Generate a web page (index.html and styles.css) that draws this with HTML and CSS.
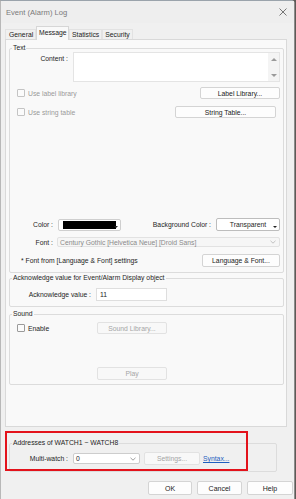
FILE: index.html
```html
<!DOCTYPE html>
<html lang="en">
<head>
    <meta charset="UTF-8">
    <title>Event (Alarm) Log</title>
    <link rel="stylesheet" href="styles.css">
</head>
<body>
    <div class="dialog">
        <!-- Title bar -->
        <div class="titlebar">
            <span class="title">Event (Alarm) Log</span>
            <svg class="close" width="8" height="8" viewBox="0 0 8 8"><path d="M0.5 0.5L7.5 7.5M7.5 0.5L0.5 7.5" stroke="#555" stroke-width="0.8"/></svg>
        </div>

        <!-- Tabs -->
        <div class="tabs">
            <div class="tab tab-general">General</div>
            <div class="tab active">Message</div>
            <div class="tab">Statistics</div>
            <div class="tab">Security</div>
        </div>

        <div class="panel">
            <fieldset class="group text-group">
                <legend>Text</legend>
                <div class="row content-row">
                    <span class="lbl lbl-content">Content :</span>
                    <div class="textarea">
                        <div class="scroll">
                            <span class="arr up"></span>
                            <span class="arr down"></span>
                        </div>
                    </div>
                </div>
                <div class="row check-row first">
                    <span class="check disabled"><i class="box"></i>Use label library</span>
                    <button class="btn btn-label">Label Library...</button>
                </div>
                <div class="row check-row second">
                    <span class="check disabled"><i class="box"></i>Use string table</span>
                    <button class="btn btn-string">String Table...</button>
                </div>
                <div class="row color-row">
                    <span class="lbl lbl-short">Color :</span>
                    <div class="picker"><span class="swatch"></span><span class="drop"></span></div>
                    <span class="lbl lbl-bg">Background Color :</span>
                    <div class="picker picker-bg"><span class="bg-text">Transparent</span><span class="drop"></span></div>
                </div>
                <div class="row font-row">
                    <span class="lbl lbl-short">Font :</span>
                    <div class="select disabled-select">
                        <span>Century Gothic [Helvetica Neue] [Droid Sans]</span>
                        <svg class="chev" width="6" height="4" viewBox="0 0 6 4"><path d="M0.5 0.8L3 3.2L5.5 0.8" fill="none" stroke="#aaa" stroke-width="0.7"/></svg>
                    </div>
                </div>
                <div class="row note-row">
                    <span class="note">* Font from [Language &amp; Font] settings</span>
                    <button class="btn btn-lang">Language &amp; Font...</button>
                </div>
            </fieldset>

            <fieldset class="group ack-group">
                <legend>Acknowledge value for Event/Alarm Display object</legend>
                <div class="row ack-row">
                    <span class="lbl lbl-ack">Acknowledge value :</span>
                    <div class="input">11</div>
                </div>
            </fieldset>

            <fieldset class="group sound-group">
                <legend>Sound</legend>
                <div class="row sound-row">
                    <span class="check enable"><i class="box"></i>Enable</span>
                    <button class="btn btn-sound" disabled>Sound Library...</button>
                </div>
                <div class="row play-row">
                    <button class="btn btn-sound" disabled>Play</button>
                </div>
            </fieldset>
        </div>

        <fieldset class="group watch-group">
            <legend>Addresses of WATCH1 ~ WATCH8</legend>
            <div class="row watch-row">
                <span class="lbl lbl-content">Multi-watch :</span>
                <div class="select combo">
                    <span>0</span>
                    <svg class="chev" width="6" height="4" viewBox="0 0 6 4"><path d="M0.5 0.8L3 3.2L5.5 0.8" fill="none" stroke="#777" stroke-width="0.7"/></svg>
                </div>
                <button class="btn btn-settings" disabled>Settings...</button>
                <a class="link" href="#">Syntax...</a>
            </div>
        </fieldset>

        <!-- red highlight drawn over the screenshot -->
        <div class="highlight"></div>

        <div class="buttons">
            <button class="btn btn-ok">OK</button>
            <button class="btn btn-cancel">Cancel</button>
            <button class="btn btn-help">Help</button>
        </div>
    </div>
</body>
</html>
```

FILE: styles.css
```css
* {
    box-sizing: border-box;
}
body {
    margin: 0;
    background-color: #5e5a56;
    font-family: "Liberation Sans", Arial, sans-serif;
    font-size: 6.8px;
    color: #1e1e1e;
}
.dialog {
    position: relative;
    width: 295px;
    height: 499px;
    background-color: #f0f0f0;
    border-top: 1px solid #9aa3ab;
    border-right: 1px solid #8c8c8c;
    border-left: 1px solid #b8b8b8;
    border-top-right-radius: 4px;
}
.titlebar {
    height: 22px;
    display: flex;
    align-items: center;
    justify-content: space-between;
    padding: 0 6px 0 5px;
    background-color: #eeeeee;
}
.title {
    font-size: 7.6px;
    color: #7a7a7a;
}
.close {
    margin-right: 1px;
}
/* Tabs */
.tabs {
    height: 16px;
    display: flex;
    align-items: flex-end;
    padding-left: 4px;
}
.tab {
    height: 10px;
    line-height: 9px;
    padding: 0 2px;
    border: 1px solid #e2e2e2;
    border-bottom: none;
    background-color: #f0f0f0;
    color: #222;
}
.tab-general {
    width: 31px;
    padding-left: 3px;
}
.tab.active {
    height: 14px;
    line-height: 11px;
    width: 33px;
    margin-bottom: -1px;
    background-color: #f9f9f9;
    border-color: #d6d6d6;
    position: relative;
    z-index: 1;
}
.panel {
    width: 282px;
    height: 388px;
    margin-left: 4px;
    padding: 0 2px 0 3px;
    background-color: #f9f9f9;
    border: 1px solid #d9d9d9;
}
/* Group boxes */
.group {
    margin: 0;
    padding: 0 3px 0 4px;
    border: 1px solid #dcdcdc;
    border-radius: 2px;
    min-inline-size: 0;
}
.group legend {
    padding: 0 1px;
    margin-left: -2px;
    line-height: 8px;
    color: #1e1e1e;
}
.text-group {
    margin-top: 4px;
    padding-bottom: 5px;
}
.ack-group {
    margin-top: 1px;
    padding-bottom: 5px;
}
.sound-group {
    margin-top: 3px;
    padding-bottom: 4px;
}
.watch-group {
    width: 268px;
    margin: 12px 0 0 8px;
    padding-bottom: 6px;
}
.row {
    display: flex;
    align-items: center;
}
.lbl {
    text-align: right;
    flex-shrink: 0;
}
.lbl-content {
    width: 54px;
    margin-right: 5px;
}
.lbl-short {
    width: 39px;
    margin-right: 5px;
}
.lbl-ack {
    width: 77px;
    margin-right: 5px;
}
.lbl-bg {
    margin-left: auto;
    margin-right: 5px;
}
/* Text group rows */
.content-row {
    height: 30px;
    align-items: flex-start;
}
.content-row .lbl {
    margin-top: 3px;
}
.textarea {
    flex: 1;
    height: 30px;
    background-color: #fff;
    border: 1px solid #e4e4e4;
    display: flex;
    justify-content: flex-end;
}
.scroll {
    width: 11px;
    height: 100%;
    background-color: #f4f4f4;
    display: flex;
    flex-direction: column;
    justify-content: space-between;
    align-items: center;
    padding: 5px 0 4px;
}
.arr {
    width: 0;
    height: 0;
    border-left: 3px solid transparent;
    border-right: 3px solid transparent;
}
.arr.up {
    border-bottom: 3px solid #9a9a9a;
}
.arr.down {
    border-top: 3px solid #9a9a9a;
}
.check-row {
    height: 12px;
}
.check-row.first {
    margin-top: 5px;
}
.check-row.second {
    margin-top: 7px;
}
.check {
    display: flex;
    align-items: center;
    margin-left: 3px;
}
.check .box {
    display: inline-block;
    width: 8px;
    height: 8px;
    margin-right: 3px;
    border: 1px solid #9a9a9a;
    border-radius: 1px;
    background-color: #fbfbfb;
}
.check.disabled {
    color: #9a9a9a;
}
.check.disabled .box {
    border-color: #c4c4c4;
}
.btn {
    height: 12px;
    padding: 0;
    font-family: inherit;
    font-size: inherit;
    color: #222;
    background-color: #fdfdfd;
    border: 1px solid #d4d4d4;
    border-radius: 2px;
}
.btn:disabled {
    color: #a5a5a5;
    background-color: #f8f8f8;
    border-color: #e2e2e2;
}
.btn-label {
    width: 80px;
    margin-left: auto;
}
.btn-string {
    width: 101px;
    margin-left: auto;
    margin-right: 4px;
}
.color-row {
    height: 13px;
    margin-top: 100px;
}
.picker {
    position: relative;
    width: 63px;
    height: 12px;
    padding: 1px 4px 1px 4px;
    background-color: #fff;
    border: 1px solid #cfcfcf;
    border-radius: 2px;
}
.swatch {
    display: block;
    height: 100%;
    background-color: #000;
}
.drop {
    position: absolute;
    right: 2px;
    bottom: 2px;
    width: 0;
    height: 0;
    border-left: 2px solid transparent;
    border-right: 2px solid transparent;
    border-top: 2px solid #222;
}
.picker-bg {
    width: 64px;
    height: 13px;
    display: flex;
    align-items: center;
    justify-content: center;
    border-color: #bdbdbd;
}
.font-row {
    height: 10px;
    margin-top: 6px;
}
.font-row .lbl-short {
    margin-right: 4px;
}
.select {
    display: flex;
    align-items: center;
    justify-content: space-between;
    padding: 0 3px 0 2px;
    border: 1px solid #e2e2e2;
    border-radius: 2px;
}
.disabled-select {
    flex: 1;
    height: 10px;
    color: #8a8a8a;
    background-color: #f6f6f6;
}
.note-row {
    height: 13px;
    margin-top: 7px;
}
.note {
    margin-left: 7px;
}
.btn-lang {
    width: 78px;
    height: 13px;
    margin-left: auto;
}
/* Acknowledge + sound */
.ack-row {
    height: 13px;
    margin-top: 6px;
}
.input {
    width: 71px;
    height: 13px;
    line-height: 11px;
    padding-left: 3px;
    background-color: #fff;
    border: 1px solid #dedede;
}
.sound-row {
    height: 12px;
    margin-top: 4px;
}
.enable {
    width: 80px;
}
.btn-sound {
    width: 70px;
}
.play-row {
    height: 13px;
    margin-top: 33px;
    padding-left: 83px;
}
.play-row .btn-sound {
    height: 13px;
}
/* Watch group */
.watch-row {
    height: 13px;
    margin-top: 5px;
}
.combo {
    width: 67px;
    height: 11px;
    background-color: #fff;
    border-color: #cdcdcd;
}
.btn-settings {
    width: 56px;
    height: 13px;
    margin-left: 4px;
}
.link {
    margin-left: 3px;
    color: #1f5fbf;
    text-decoration: underline;
}
.highlight {
    position: absolute;
    left: 4px;
    top: 430px;
    width: 243px;
    height: 40px;
    border: 2px solid #e3121b;
}
.buttons {
    display: flex;
    justify-content: flex-end;
    gap: 5px;
    margin-top: 9px;
    padding-right: 1px;
}
.buttons .btn {
    height: 14px;
    font-size: 7px;
}
.btn-ok {
    width: 44px;
}
.btn-cancel {
    width: 45px;
}
.btn-help {
    width: 46px;
}
```
